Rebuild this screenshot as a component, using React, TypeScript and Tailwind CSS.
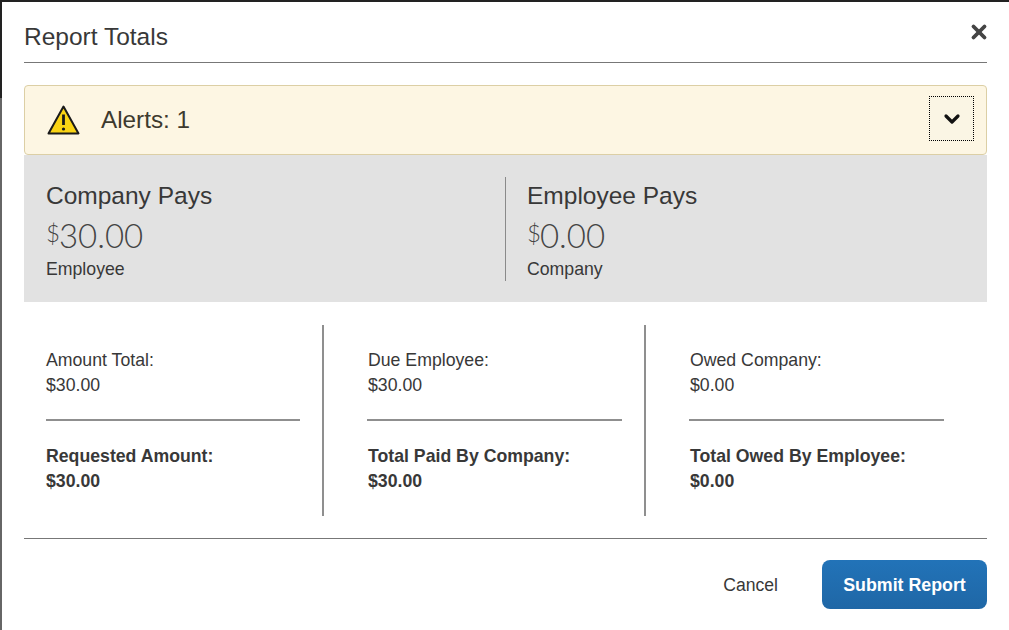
import { ChevronDown, X } from 'lucide-react'

const sans = "font-['Liberation_Sans',Arial,sans-serif]"

const totals = [
  { label: 'Amount Total:', amount: '$30.00', totalLabel: 'Requested Amount:', total: '$30.00', pad: 'pl-[22px] border-r-2 border-[#8f8f8f]', rule: '' },
  { label: 'Due Employee:', amount: '$30.00', totalLabel: 'Total Paid By Company:', total: '$30.00', pad: 'pl-[44px] border-r-2 border-[#8f8f8f]', rule: '-ml-[1px] w-[255px]' },
  { label: 'Owed Company:', amount: '$0.00', totalLabel: 'Total Owed By Employee:', total: '$0.00', pad: 'pl-[44px]', rule: '-ml-[1px] w-[255px]' },
]

function Pays({ title, amount, note, divider }: { title: string; amount: string; note: string; divider?: boolean }) {
  return (
    <div className={`w-[481px] h-[104px] ${divider ? 'pl-[21px] border-l border-[#8a8a8a]' : 'pl-[22px]'}`}>
      <div className="text-[24.5px] leading-[38px] text-[#383838]">{title}</div>
      <div className="flex items-start h-[41px] text-[#444] font-['Lato',sans-serif] font-light">
        <span className="text-[24px] leading-[35px] -mr-[1px]">$</span>
        <span className="text-[33px] leading-[41px]">{amount}</span>
      </div>
      <div className="text-[17.7px] leading-[26px] text-[#383838]">{note}</div>
    </div>
  )
}

export default function App() {
  return (
    <div className={`${sans} relative w-[1009px] h-[630px] bg-white border-t-2 border-[#222] overflow-hidden`}>
      <div className="absolute left-0 top-0 w-[2px] h-[96px] bg-[#222]" />
      <div className="absolute left-0 top-[96px] w-[2px] h-[532px] bg-[#666]" />
      <div className="ml-[24px] w-[963px]">
        <div className="flex items-center justify-between h-[61px] border-b border-[#777]">
          <div className="text-[24.5px] leading-[36px] mt-[10px] text-[#383838]">Report Totals</div>
          <X size={22} strokeWidth={4.2} className="text-[#444] -mt-[1px] -mr-[3px]" />
        </div>

        <div className="mt-[22px] flex items-center justify-between h-[70px] pl-[22px] pr-[12px] bg-[#fdf6e3] border border-[#dccfa5] rounded-[4px]">
          <div className="flex items-center gap-[21px]">
            <svg width="33" height="31" viewBox="0 0 33 31">
              <path d="M16.5 1.5 L31.5 28.5 L1.5 28.5 Z" fill="#fad414" stroke="#1a1a1a" strokeWidth="2" strokeLinejoin="round" />
              <path d="M16.5 9.5 V20" stroke="#1a1a1a" strokeWidth="2.8" />
              <circle cx="16.5" cy="24" r="1.6" fill="#1a1a1a" />
            </svg>
            <span className="text-[24.3px] text-[#3d3a2e]">Alerts: 1</span>
          </div>
          <div className="flex items-center justify-center w-[45px] h-[45px] -mt-[3px] border border-dotted border-black bg-[#faf5e4]">
            <ChevronDown size={24} strokeWidth={3.2} className="text-[#111]" />
          </div>
        </div>

        <div className="flex items-start h-[147px] pt-[22px] bg-[#e2e2e2]">
          <Pays title="Company Pays" amount="30.00" note="Employee" />
          <Pays title="Employee Pays" amount="0.00" note="Company" divider />
        </div>

        <div className="grid grid-cols-[300px_322px_1fr] mt-[23px] h-[191px]">
          {totals.map((t) => (
            <div key={t.label} className={`pt-[23px] text-[17.7px] leading-[25px] text-[#383838] ${t.pad}`}>
              <div>{t.label}</div>
              <div>{t.amount}</div>
              <div className={`mt-[21px] mb-[23px] border-t-2 border-[#8f8f8f] ${t.rule || 'w-[254px]'}`} />
              <div className="font-bold">{t.totalLabel}</div>
              <div className="font-bold">{t.total}</div>
            </div>
          ))}
        </div>

        <div className="flex items-center justify-end gap-[44px] mt-[22px] pt-[21px] border-t border-[#777]">
          <span className="text-[17.6px] mt-[2px] text-[#383838]">Cancel</span>
          <button className="w-[165px] h-[49px] pt-[2px] rounded-[8px] bg-gradient-to-b from-[#2273b8] to-[#1f67a6] text-white text-[17.8px] font-bold">
            Submit Report
          </button>
        </div>
      </div>
    </div>
  )
}
